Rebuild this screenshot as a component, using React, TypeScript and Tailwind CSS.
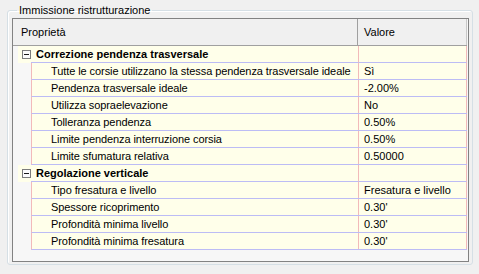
import React from 'react';

type Row = { name: string; value: string };
type Group = { title: string; rows: Row[] };

const groups: Group[] = [
  {
    title: 'Correzione pendenza trasversale',
    rows: [
      { name: 'Tutte le corsie utilizzano la stessa pendenza trasversale ideale', value: 'Sì' },
      { name: 'Pendenza trasversale ideale', value: '-2.00%' },
      { name: 'Utilizza sopraelevazione', value: 'No' },
      { name: 'Tolleranza pendenza', value: '0.50%' },
      { name: 'Limite pendenza interruzione corsia', value: '0.50%' },
      { name: 'Limite sfumatura relativa', value: '0.50000' },
    ],
  },
  {
    title: 'Regolazione verticale',
    rows: [
      { name: 'Tipo fresatura e livello', value: 'Fresatura e livello' },
      { name: 'Spessore ricoprimento', value: "0.30'" },
      { name: 'Profondità minima livello', value: "0.30'" },
      { name: 'Profondità minima fresatura', value: "0.30'" },
    ],
  },
];

const GroupRow: React.FC<{ title: string }> = ({ title }) => (
  <div className="flex h-[17px]">
    <div className="w-[5px] shrink-0" />
    <div className="flex flex-1 bg-[#ffffea]">
      <div className="flex w-[13px] shrink-0 items-center justify-end">
        <div className="flex h-[9px] w-[9px] items-center justify-center border border-[#7c7c7c] bg-[#fcfcfc]">
          <div className="h-px w-[5px] bg-[#1a1a1a]" />
        </div>
      </div>
      <div className="flex w-[327px] shrink-0 items-center border-b border-b-[#bcbcf5] pl-[5px] font-bold">
        {title}
      </div>
      <div className="flex-1 border-b border-l border-r border-b-[#bcbcf5] border-l-[#f2baba] border-r-[#f2baba]" />
    </div>
  </div>
);

const DataRow: React.FC<Row> = ({ name, value }) => (
  <div className="flex h-[17px]">
    <div className="w-[18px] shrink-0" />
    <div className="flex flex-1 border-b border-l border-b-[#bcbcf5] border-l-[#f2baba] bg-[#ffffea]">
      <div className="flex w-[326px] shrink-0 items-center whitespace-nowrap pl-[19px] tracking-[-0.08px]">{name}</div>
      <div className="flex flex-1 items-center whitespace-nowrap border-l border-r border-l-[#f2baba] border-r-[#f2baba] pl-[5px]">
        {value}
      </div>
    </div>
  </div>
);

export default function App() {
  return (
    <div className="h-[274px] w-[479px] bg-[#f0f0f0] pt-[3px] font-['Liberation_Sans',Arial,sans-serif] text-[11px] leading-[14px] text-[#000]">
      <fieldset className="ml-[7px] mr-[6px] rounded-[3px] border border-[#d5dfe5] pb-[2px] pl-[4px] pr-[3px] shadow-[inset_1px_1px_0_#ffffff]">
        <legend className="ml-[5px] px-[2px] text-[#000]">Immissione ristrutturazione</legend>
        <div className="mt-px h-[244px] border border-[#828282] bg-[#f7f7f7] pr-px">
          <div className="flex h-[27px] border-b border-[#a0a0a0] bg-[#f0f0f0]">
            <div className="flex w-[345px] shrink-0 items-center border-r border-[#a0a0a0] pl-[8px]">Proprietà</div>
            <div className="flex flex-1 items-center border-r border-[#c8c8c8] pl-[6px]">Valore</div>
          </div>
          {groups.map((g) => (
            <div key={g.title}>
              <GroupRow title={g.title} />
              {g.rows.map((r) => (
                <DataRow key={r.name} {...r} />
              ))}
            </div>
          ))}
        </div>
      </fieldset>
    </div>
  );
}
